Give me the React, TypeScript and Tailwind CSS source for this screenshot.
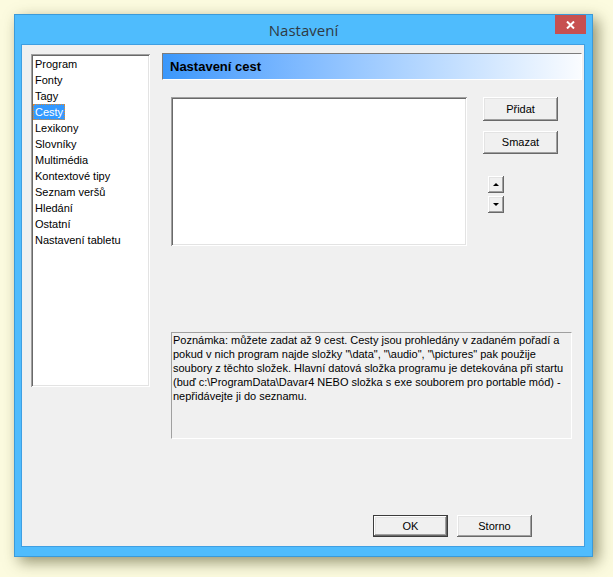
const raised =
  "shadow-[inset_-1px_-1px_0_#696969,inset_1px_1px_0_#ffffff,inset_-2px_-2px_0_#a0a0a0,inset_2px_2px_0_#e3e3e3] bg-[#f0f0f0]";
const sunken =
  "shadow-[inset_1px_1px_0_#a0a0a0,inset_-1px_-1px_0_#ffffff,inset_2px_2px_0_#696969,inset_-2px_-2px_0_#e3e3e3] bg-white";

const sections = [
  "Program",
  "Fonty",
  "Tagy",
  "Cesty",
  "Lexikony",
  "Slovníky",
  "Multimédia",
  "Kontextové tipy",
  "Seznam veršů",
  "Hledání",
  "Ostatní",
  "Nastavení tabletu",
];

function Button({ label, className }: { label: string; className: string }) {
  return (
    <div className={`flex items-center justify-center text-[11px] text-black ${raised} ${className}`}>
      {label}
    </div>
  );
}

function ArrowButton({ up }: { up: boolean }) {
  return (
    <div className={`w-[16px] h-[17px] flex items-center justify-center ${raised}`}>
      {up ? (
        <div className="w-0 h-0 border-l-[3px] border-r-[3px] border-b-[3px] border-l-transparent border-r-transparent border-b-black" />
      ) : (
        <div className="w-0 h-0 border-l-[3px] border-r-[3px] border-t-[3px] border-l-transparent border-r-transparent border-t-black" />
      )}
    </div>
  );
}

export default function App() {
  return (
    <div className="w-[613px] h-[577px] bg-[#fcfbdf] pt-[14px] pl-[14px] font-['Liberation_Sans',Arial,sans-serif]">
      <div className="w-[579px] h-[543px] bg-[#4fbcfd] border border-[#3b9ad9] flex flex-col shadow-[5px_5px_14px_rgba(60,60,20,0.55)]">
        {/* title bar */}
        <div className="relative h-[29px] shrink-0 flex items-center justify-center">
          <span className="text-[15px] text-[#2f3a44] font-['Open_Sans',sans-serif] pt-[2px]">Nastavení</span>
          <div className="absolute right-[6px] top-0 w-[31px] h-[19px] bg-[#c75050] flex items-center justify-center">
            <svg width="9" height="8" viewBox="0 0 9 8">
              <path d="M1 0.5 L8 7.5 M8 0.5 L1 7.5" stroke="white" strokeWidth="2" />
            </svg>
          </div>
        </div>

        {/* client area */}
        <div className="ml-[6px] mr-[7px] mb-[9px] flex-1 bg-[#f0f0f0] border border-[#3f9fe2] flex items-start pt-[8px] pl-[9px]">
          {/* section list */}
          <div className={`mt-[1px] w-[119px] h-[333px] pt-[2px] pl-[2px] ${sunken}`}>
            {sections.map((s) => (
              <div key={s} className="h-[16px] leading-[16px] text-[11px] text-black">
                {s === "Cesty" ? (
                  <span className="inline-block h-[16px] leading-[14px] px-[1px] bg-[#3399ff] text-white border border-dotted border-[#e08a30]">
                    {s}
                  </span>
                ) : (
                  <span className="pl-[2px]">{s}</span>
                )}
              </div>
            ))}
          </div>

          {/* right side */}
          <div className="ml-[12px] w-[420px] flex flex-col">
            <div className="h-[27px] border-t border-l border-[#7c7c7c] border-b-white border-r-white border-b border-r bg-gradient-to-r from-[#3a97fb] to-[#fafcff] flex items-center pl-[7px]">
              <span className="text-[13px] font-bold text-black">Nastavení cest</span>
            </div>

            <div className="flex mt-[17px] ml-[9px]">
              <div className={`w-[296px] h-[149px] ${sunken}`} />
              <div className="ml-[16px] flex flex-col">
                <Button label="Přidat" className="w-[75px] h-[24px]" />
                <Button label="Smazat" className="w-[75px] h-[23px] mt-[10px]" />
                <div className="ml-[5px] mt-[22px] flex flex-col gap-[3px]">
                  <ArrowButton up />
                  <ArrowButton up={false} />
                </div>
              </div>
            </div>

            <div className="mt-[86px] ml-[9px] w-[401px] h-[107px] border-t border-l border-[#a0a0a0] border-b border-r border-b-white border-r-white pl-[1px] text-[11px] leading-[14px] text-black">
              {"Poznámka: můžete zadat až 9 cest. Cesty jsou prohledány v zadaném pořadí a"}
              <br />
              {'pokud v nich program najde složky "\\data", "\\audio", "\\pictures" pak použije'}
              <br />
              {"soubory z těchto složek. Hlavní datová složka programu je detekována při startu"}
              <br />
              {"(buď c:\\ProgramData\\Davar4 NEBO složka s exe souborem pro portable mód) -"}
              <br />
              {"nepřidávejte ji do seznamu."}
            </div>

            <div className="flex mt-[76px] ml-[211px] gap-[9px]">
              <div className="w-[75px] h-[22px] border border-[#3c3c3c] flex">
                <Button label="OK" className="flex-1" />
              </div>
              <Button label="Storno" className="w-[75px] h-[22px]" />
            </div>
          </div>
        </div>
      </div>
    </div>
  );
}
